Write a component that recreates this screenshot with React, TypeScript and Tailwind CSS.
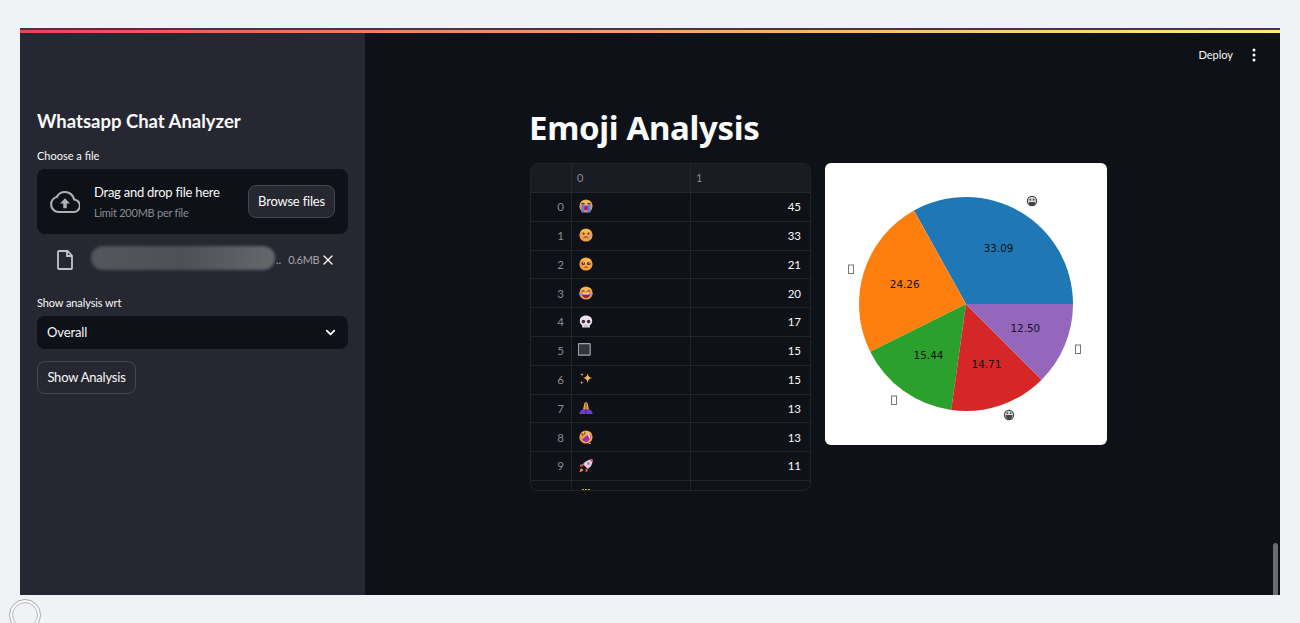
import React from 'react'
import { ChevronDown, X } from 'lucide-react'

const rows = [
  { i: 0, emoji: 'sob', n: 45 },
  { i: 1, emoji: 'tear', n: 33 },
  { i: 2, emoji: 'plead', n: 21 },
  { i: 3, emoji: 'joy', n: 20 },
  { i: 4, emoji: 'skull', n: 17 },
  { i: 5, emoji: 'box', n: 15 },
  { i: 6, emoji: 'sparkle', n: 15 },
  { i: 7, emoji: 'pray', n: 13 },
  { i: 8, emoji: 'rofl', n: 13 },
  { i: 9, emoji: 'rocket', n: 11 },
]

const Face = ({ children }: { children?: React.ReactNode }) => (
  <>
    <circle cx="8" cy="8" r="6.6" fill="#f59e42" />
    <path d="M3 4.5A6.6 6.6 0 0 1 13 4.5L8 7Z" fill="#f7bb4e" />
    {children}
  </>
)

const Emoji = ({ name }: { name: string }) => (
  <svg width="16" height="16" viewBox="0 0 16 16" className="-mt-px blur-[0.3px]">
    {name === 'sob' && (
      <Face>
        <path d="M3.5 6h3v8.4h-3zM9.5 6h3v8.4h-3z" fill="#5f7ce8" />
        <ellipse cx="8" cy="10" rx="2" ry="2.6" fill="#a81f6b" />
        <path d="M3.5 5.4h3M9.5 5.4h3" stroke="#4a2c3a" strokeWidth="1" />
      </Face>
    )}
    {name === 'tear' && (
      <Face>
        <circle cx="5.6" cy="6.6" r="1" fill="#4a2c3a" />
        <circle cx="10.4" cy="6.6" r="1" fill="#4a2c3a" />
        <path d="M5.5 11c1.6-1.4 3.4-1.4 5 0" stroke="#7a2c3a" strokeWidth="1" fill="none" />
        <ellipse cx="11.2" cy="9.4" rx="0.9" ry="1.4" fill="#7fb5f0" />
      </Face>
    )}
    {name === 'plead' && (
      <Face>
        <circle cx="5.2" cy="7.4" r="1.7" fill="#4a2c3a" />
        <circle cx="10.8" cy="7.4" r="1.7" fill="#4a2c3a" />
        <circle cx="5.6" cy="6.9" r="0.6" fill="#fff" />
        <circle cx="11.2" cy="6.9" r="0.6" fill="#fff" />
        <path d="M6.4 11.6c1-.8 2.2-.8 3.2 0" stroke="#7a2c3a" strokeWidth="1" fill="none" />
      </Face>
    )}
    {name === 'joy' && (
      <Face>
        <path d="M3.8 6.4l2.2-1 1 1M9 6.4l1-1 2.2 1" stroke="#4a2c3a" strokeWidth="0.9" fill="none" />
        <path d="M3.6 8.2h8.8C12.2 11.4 10.2 13 8 13S3.8 11.4 3.6 8.2Z" fill="#8e1f4b" />
        <path d="M4.2 8.2h7.6l-.4 1.3H4.6Z" fill="#fff" />
        <path d="M1.2 8.6c1.6-.3 2.4.4 2.6 2-1.6.5-2.6-.2-2.6-2ZM14.8 8.6c-1.6-.3-2.4.4-2.6 2 1.6.5 2.6-.2 2.6-2Z" fill="#6aa5ee" />
      </Face>
    )}
    {name === 'skull' && (
      <>
        <path d="M8 1.6c3.8 0 6.2 2.4 6.2 5.4 0 2-1 3.4-2.4 4.2v2.2H4.2v-2.2C2.8 10.4 1.8 9 1.8 7c0-3 2.4-5.4 6.2-5.4Z" fill="#eee3ec" />
        <circle cx="5.4" cy="7.6" r="1.8" fill="#3a2c44" />
        <circle cx="10.6" cy="7.6" r="1.8" fill="#3a2c44" />
        <path d="M7.2 10.6h1.6M6.4 11.4v2M8 11.4v2M9.6 11.4v2" stroke="#8c7b94" strokeWidth="0.6" />
      </>
    )}
    {name === 'box' && (
      <rect x="0.4" y="1.6" width="11.8" height="11.6" fill="#33363f" stroke="#a1a3aa" strokeWidth="1.2" rx="0.6" />
    )}
    {name === 'sparkle' && (
      <>
        <path d="M9.6 2.2c.5 3 1.6 4.2 4.6 4.8-3 .6-4.1 1.8-4.6 4.8-.5-3-1.6-4.2-4.6-4.8 3-.6 4.1-1.8 4.6-4.8Z" fill="#f7b955" />
        <path d="M4 1.8c.2 1.2.6 1.6 1.8 1.8-1.2.2-1.6.6-1.8 1.8-.2-1.2-.6-1.6-1.8-1.8C3.4 3.4 3.8 3 4 1.8Z" fill="#f59a4a" />
        <path d="M3.8 9.4c.2 1.4.7 1.9 2.1 2.1-1.4.2-1.9.7-2.1 2.1-.2-1.4-.7-1.9-2.1-2.1 1.4-.2 1.9-.7 2.1-2.1Z" fill="#f59a4a" />
      </>
    )}
    {name === 'pray' && (
      <>
        <path d="M7.7 1.8v8H5l1-5c.2-1.2.8-2.4 1.7-3ZM8.3 1.8v8H11l-1-5c-.2-1.2-.8-2.4-1.7-3Z" fill="#f7a13e" />
        <path d="M1.4 14c0-2.4 1.4-4.4 3.6-4.6l2.7.4V14ZM14.6 14c0-2.4-1.4-4.4-3.6-4.6l-2.7.4V14Z" fill="#6a3fd0" />
      </>
    )}
    {name === 'rofl' && (
      <Face>
        <path d="M2.8 4.4 5 5.2l-.6 1.8M6.6 2.8l.6 2.2-1.8.4" stroke="#4a2c3a" strokeWidth="0.8" fill="none" />
        <path d="M4.2 10.6 11 4.4c1.6 1.2 2.2 3 1.8 4.8L9.4 12.8c-2 .6-4-.4-5.2-2.2Z" fill="#a02fa8" />
        <path d="M11 4.6 12.6 9l-.9.9L9.8 5.6Z" fill="#fff" />
        <path d="M1.4 9.6c1.2-.2 2 .3 2.2 1.6-1.2.4-2-.2-2.2-1.6ZM10.4 14.4c1-.9 1.9-.9 2.8-.2-.8 1.1-1.9 1.2-2.8.2Z" fill="#6aa5ee" />
      </Face>
    )}
    {name === 'rocket' && (
      <>
        <path d="M14.6 1.4c.2 3.4-1 6.4-3.6 8.6l-1.2 1L5 6.2l1-1.2C8.2 2.4 11.2 1.2 14.6 1.4Z" fill="#f2c7d8" />
        <path d="M14.6 1.4c.1 1.2 0 2.2-.2 3.2l-3-3c1-.2 2-.3 3.2-.2Z" fill="#e2476f" />
        <circle cx="10.4" cy="5.6" r="1.3" fill="#5b8fe6" />
        <path d="M5.2 6 2.4 6.6 1.6 8.4l3.6.2ZM10 10.8l-.6 2.8-1.8.8-.2-3.6Z" fill="#e2476f" />
        <path d="M3.6 10.2c-1.2.6-1.8 1.8-2 3.8 2-.2 3.2-.8 3.8-2Z" fill="#f08a3c" />
      </>
    )}
  </svg>
)

const CloudUpload = () => (
  <svg width="30" height="30" viewBox="0 0 24 24" fill="none" stroke="#afb1b6" strokeWidth="1.7">
    <path d="M19.35 10.04A7.49 7.49 0 0 0 12 4a7.48 7.48 0 0 0-6.65 4.04A5.99 5.99 0 0 0 0.9 14c0 3.3 2.7 6 6 6h12c2.76 0 5-2.24 5-5 0-2.64-2.05-4.78-4.55-4.96Z" />
    <path d="M12 9l4 4.2h-2.6V17h-2.8v-3.8H8Z" fill="#afb1b6" stroke="none" />
  </svg>
)

const FileIcon = () => (
  <svg width="24" height="24" viewBox="0 0 24 24" fill="none" stroke="#c3c4c8" strokeWidth="1.8">
    <path d="M6 3h8.5L19 7.5V20a1 1 0 0 1-1 1H6a1 1 0 0 1-1-1V4a1 1 0 0 1 1-1Z" />
    <path d="M14 3v5h5" />
  </svg>
)

const slices = [
  { pct: 33.09, color: '#1f77b4' },
  { pct: 24.26, color: '#ff7f0e' },
  { pct: 15.44, color: '#2ca02c' },
  { pct: 14.71, color: '#d62728' },
  { pct: 12.5, color: '#9467bd' },
]

const PieChart = () => {
  const cx = 141
  const cy = 141
  const r = 107
  let start = 0
  const pt = (deg: number, rad: number) => [
    cx + rad * Math.cos((deg * Math.PI) / 180),
    cy - rad * Math.sin((deg * Math.PI) / 180),
  ]
  return (
    <svg width="282" height="282" viewBox="0 0 282 282">
      {slices.map((s) => {
        const a0 = start
        const a1 = start + (s.pct / 100) * 360
        start = a1
        const [x0, y0] = pt(a0, r)
        const [x1, y1] = pt(a1, r)
        const [tx, ty] = pt((a0 + a1) / 2, r * 0.6)
        const large = a1 - a0 > 180 ? 1 : 0
        return (
          <g key={s.color}>
            <path d={`M${cx} ${cy}L${x0} ${y0}A${r} ${r} 0 ${large} 0 ${x1} ${y1}Z`} fill={s.color} />
            <text
              x={tx}
              y={ty + 3}
              textAnchor="middle"
              fontSize="10.4"
              fill="#111"
              fontFamily='"DejaVu Sans", sans-serif'
            >
              {s.pct.toFixed(2)}
            </text>
          </g>
        )
      })}
      {/* missing-glyph boxes the chart font drew for the emoji labels */}
      <rect x="23.5" y="102" width="5" height="8.5" fill="#fff" stroke="#777" />
      <rect x="250.5" y="182" width="5" height="8.5" fill="#fff" stroke="#777" />
      <rect x="66.5" y="233" width="5" height="8.5" fill="#fff" stroke="#777" />
      <g transform="translate(207 38)">
        <circle r="4.6" fill="#ddd" stroke="#444" strokeWidth="1.2" />
        <path d="M-3 1h6V4h-6Z" fill="#444" />
        <circle cx="-1.6" cy="-1.2" r="1" fill="#444" />
        <circle cx="1.6" cy="-1.2" r="1" fill="#444" />
      </g>
      <g transform="translate(184 252)">
        <circle r="4.6" fill="#ddd" stroke="#444" strokeWidth="1.2" />
        <path d="M-3.4 0h6.8C3.4 3 1.5 4.2 0 4.2S-3.4 3-3.4 0Z" fill="#444" />
        <circle cx="-1.6" cy="-1.8" r="0.9" fill="#444" />
        <circle cx="1.6" cy="-1.8" r="0.9" fill="#444" />
      </g>
    </svg>
  )
}

const App = () => {
  return (
    <div
      className="relative h-[623px] w-full overflow-hidden bg-[#f0f2f6] px-5 pt-7"
      style={{ fontFamily: 'Lato, "Noto Sans", sans-serif' }}
    >
      <div className="flex h-[567px] flex-col overflow-hidden bg-[#0e1117]">
        <div className="h-[2px] shrink-0 bg-[#4a3346]" />
        <div className="h-[3px] shrink-0 bg-gradient-to-r from-[#e8474c] to-[#f8ef80]" />
        <div className="flex min-h-0 flex-1">
          {/* sidebar */}
          <div className="flex w-[345px] shrink-0 flex-col bg-[#262730] px-[17px] pt-[76px] text-[#fafafa]">
            <h2 className="text-[18.5px] leading-6 font-bold">Whatsapp Chat Analyzer</h2>
            <label className="mt-[15px] text-[11px] leading-4">Choose a file</label>
            <div className="mt-[5px] flex h-[65px] items-center rounded-lg bg-[#0e1117] pr-[13px] pl-[13px]">
              <CloudUpload />
              <div className="ml-[14px] flex flex-col">
                <span className="text-[13px] leading-5 tracking-[-0.25px]">Drag and drop file here</span>
                <span className="mt-[3px] text-[11px] leading-4 tracking-[-0.25px] text-[#8b8d93]">Limit 200MB per file</span>
              </div>
              <button className="ml-auto h-[33px] w-[87px] rounded-lg border border-[#45464f] bg-[#262730] text-[13px] tracking-[-0.2px]">
                Browse files
              </button>
            </div>
            <div className="mt-[13px] flex h-[26px] items-center pl-4">
              <FileIcon />
              <div className="-mt-1 ml-[14px] h-[24px] w-[184px] rounded-full bg-gradient-to-r from-[#55565b] via-[#4f5055] to-[#67686c] blur-[1.5px]" />
              <span className="ml-[1px] text-[11px] text-[#a3a4a9]">..</span>
              <span className="ml-[7px] text-[11px] tracking-[-0.3px] text-[#a3a4a9]">0.6MB</span>
              <X size={16} className="ml-[1px] text-[#fafafa]" />
            </div>
            <label className="mt-[22px] text-[11px] leading-4 tracking-[-0.1px]">Show analysis wrt</label>
            <div className="mt-[5px] flex h-[33px] items-center justify-between rounded-lg bg-[#0e1117] pr-[10px] pl-[10px] text-[13px] tracking-[-0.1px]">
              <span>Overall</span>
              <ChevronDown size={15} strokeWidth={3} />
            </div>
            <button className="mt-3 h-[33px] w-[99px] rounded-lg border border-[#45464f] bg-[#262730] text-[13px] tracking-[-0.2px]">
              Show Analysis
            </button>
          </div>

          {/* main area */}
          <div className="relative flex min-w-0 flex-1 flex-col">
            <div className="flex h-[46px] shrink-0 items-center justify-end gap-[19px] pr-6 pb-[2px] text-[11px] text-[#fafafa]">
              <span>Deploy</span>
              <svg width="4" height="14" viewBox="0 0 4 14" fill="#fafafa">
                <circle cx="2" cy="2" r="1.5" />
                <circle cx="2" cy="7" r="1.5" />
                <circle cx="2" cy="12" r="1.5" />
              </svg>
            </div>
            <div className="pl-[165px]">
              <h1
                className="mt-[26px] -ml-px text-[33px] leading-[46px] font-bold tracking-[-0.35px] text-[#fafafa]"
                style={{ fontFamily: '"Noto Sans", sans-serif' }}
              >
                Emoji Analysis
              </h1>
              <div className="mt-3 flex items-start gap-[14px]">
                <div className="h-[328px] w-[281px] overflow-hidden rounded-lg border border-[#22242b]">
                  <div className="flex h-[29px] w-[279px] border-b border-[#24262d] bg-[#1a1c24] text-[11px] text-[#8b8d93]">
                    <div className="w-[40px]" />
                    <div className="flex w-[119px] items-center border-l border-[#24262d] pl-[5px]">0</div>
                    <div className="flex w-[119px] items-center border-l border-[#24262d] pl-[5px]">1</div>
                  </div>
                  {rows.map((row) => (
                    <div key={row.i} className="flex h-[28.8px] w-[279px] border-b border-[#22242b] text-[11.5px]">
                      <div className="flex w-[40px] items-center justify-end pr-[7px] text-[#8b8d93]">{row.i}</div>
                      <div className="flex w-[119px] items-center border-l border-[#22242b] pl-[6px]">
                        <Emoji name={row.emoji} />
                      </div>
                      <div className="flex w-[119px] items-center justify-end border-l border-[#22242b] pr-[8px] text-[#fafafa]">
                        {row.n}
                      </div>
                    </div>
                  ))}
                  <div className="flex h-[12px] w-[279px]">
                    <div className="w-[40px]" />
                    <div className="w-[119px] border-l border-[#22242b] pl-[10px]">
                      <div className="mt-[8px] flex gap-[1px]">
                        <div className="h-[2px] w-[2px] bg-[#d9a632]" />
                        <div className="h-[2px] w-[2px] bg-[#d9a632]" />
                        <div className="h-[2px] w-[2px] bg-[#d9a632]" />
                      </div>
                    </div>
                    <div className="w-[119px] border-l border-[#22242b]" />
                  </div>
                </div>
                <div className="h-[282px] w-[282px] overflow-hidden rounded-md bg-white">
                  <PieChart />
                </div>
              </div>
            </div>
            {/* scrollbar */}
            <div className="absolute right-[2px] bottom-0 h-[52px] w-[5px] rounded-t-full bg-[#6b6c70]" />
          </div>
        </div>
      </div>
      {/* recording badge in the corner */}
      <div className="absolute top-[599px] left-[9px] flex h-8 w-8 items-center justify-center rounded-full border border-[#a8a9ad] bg-white">
        <div className="h-[26px] w-[26px] rounded-full border border-[#b5b6ba] bg-[#f0f2f6]" />
      </div>
    </div>
  )
}

export default App
